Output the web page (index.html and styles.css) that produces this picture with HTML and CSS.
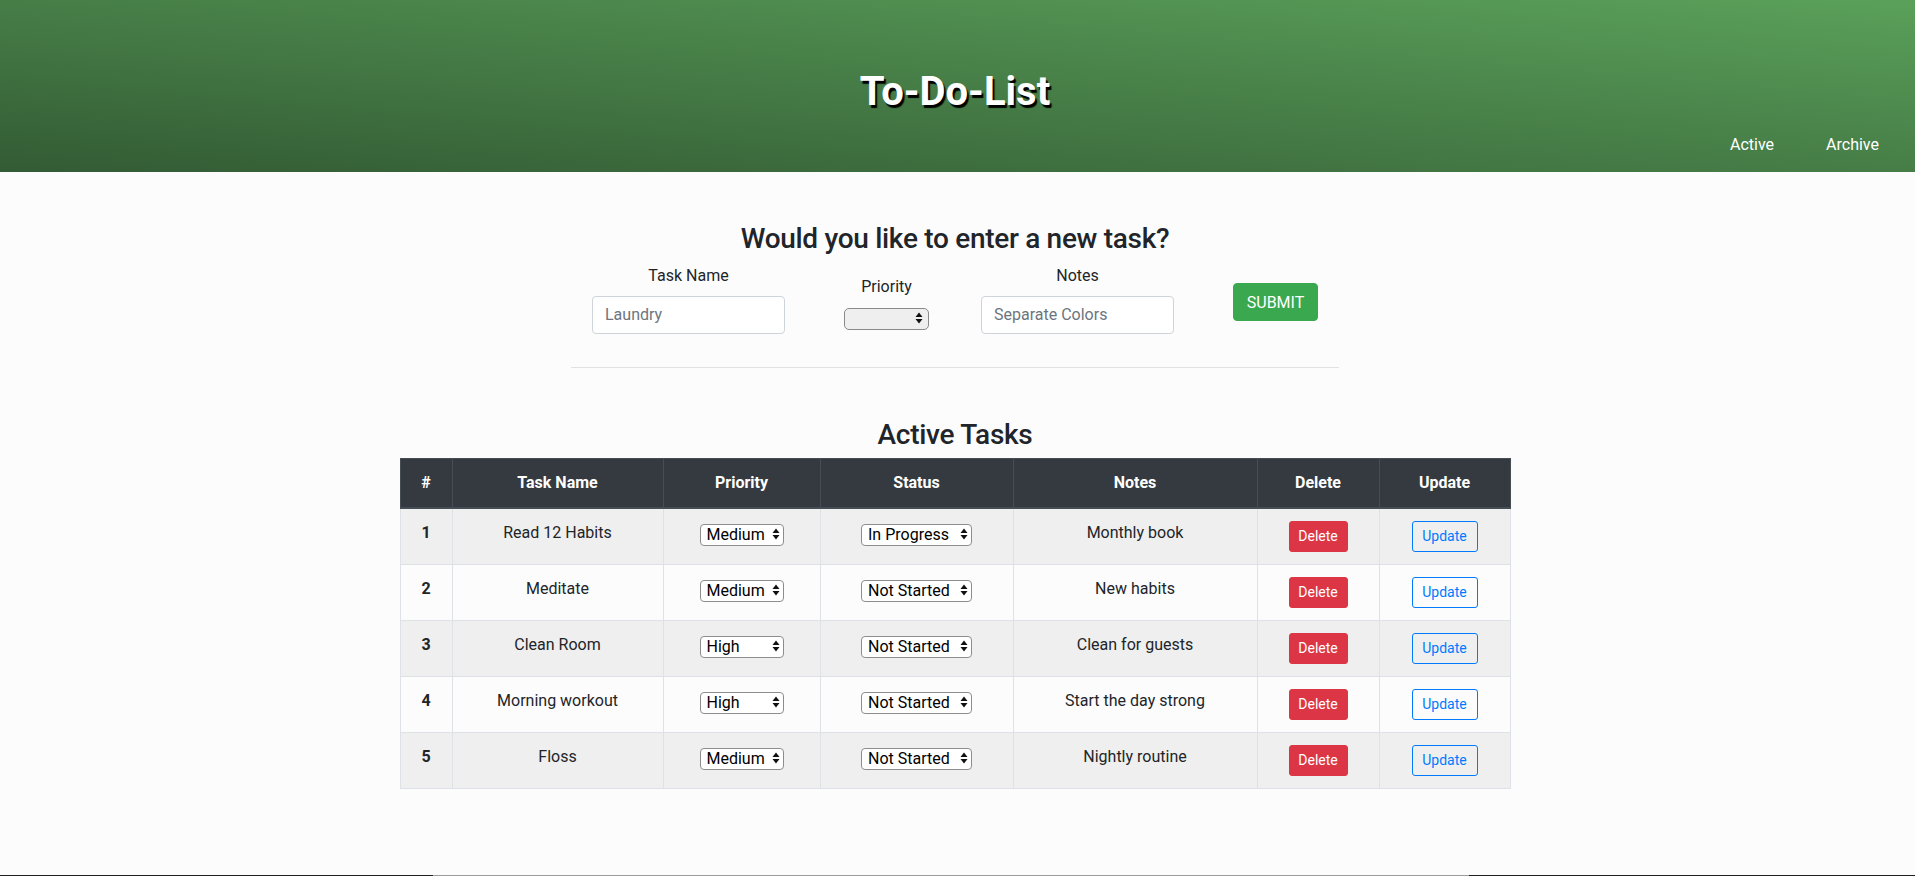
FILE: index.html
```html
<!DOCTYPE html>
<html lang="en">
<head>
<meta charset="utf-8">
<title>To-Do-List</title>
<link rel="stylesheet" href="styles.css">
</head>
<body>
<header class="site-header">
  <h1 class="site-title">To-Do-List</h1>
  <nav class="site-nav">
    <a href="#" class="nav-link">Active</a>
    <a href="#" class="nav-link">Archive</a>
  </nav>
</header>

<main class="page">
  <section class="new-task">
    <h3 class="section-title">Would you like to enter a new task?</h3>
    <form class="task-form">
      <div class="field field-text field-task">
        <label class="field-label">Task Name</label>
        <input class="text-input" type="text" placeholder="Laundry">
      </div>
      <div class="field field-priority">
        <label class="field-label">Priority</label>
        <span class="select select-form">
          <select class="select-input"><option></option></select>
          <svg class="select-arrows" width="8" height="12" viewBox="0 0 8 12"><path d="M0.5 5 L4 0.5 L7.5 5 Z M0.5 7 L4 11.5 L7.5 7 Z" fill="#111"/></svg>
        </span>
      </div>
      <div class="field field-text field-notes">
        <label class="field-label">Notes</label>
        <input class="text-input" type="text" placeholder="Separate Colors">
      </div>
      <button type="button" class="btn-submit">SUBMIT</button>
    </form>
    <hr class="divider">
  </section>

  <section class="tasks">
    <h3 class="section-title tasks-title">Active Tasks</h3>
    <table class="task-table">
      <colgroup>
        <col class="col-num"><col class="col-name"><col class="col-priority"><col class="col-status"><col class="col-notes"><col class="col-delete"><col class="col-update">
      </colgroup>
      <thead>
        <tr><th>#</th><th>Task Name</th><th>Priority</th><th>Status</th><th>Notes</th><th>Delete</th><th>Update</th></tr>
      </thead>
      <tbody>
        <tr>
          <th>1</th><td>Read 12 Habits</td>
          <td><span class="select select-priority"><select class="select-input"><option>Medium</option></select><svg class="select-arrows" width="8" height="12" viewBox="0 0 8 12"><path d="M0.5 5 L4 0.5 L7.5 5 Z M0.5 7 L4 11.5 L7.5 7 Z" fill="#111"/></svg></span></td>
          <td><span class="select select-status"><select class="select-input"><option>In Progress</option></select><svg class="select-arrows" width="8" height="12" viewBox="0 0 8 12"><path d="M0.5 5 L4 0.5 L7.5 5 Z M0.5 7 L4 11.5 L7.5 7 Z" fill="#111"/></svg></span></td>
          <td>Monthly book</td>
          <td><button type="button" class="btn-sm btn-delete">Delete</button></td>
          <td><button type="button" class="btn-sm btn-update">Update</button></td>
        </tr>
        <tr>
          <th>2</th><td>Meditate</td>
          <td><span class="select select-priority"><select class="select-input"><option>Medium</option></select><svg class="select-arrows" width="8" height="12" viewBox="0 0 8 12"><path d="M0.5 5 L4 0.5 L7.5 5 Z M0.5 7 L4 11.5 L7.5 7 Z" fill="#111"/></svg></span></td>
          <td><span class="select select-status"><select class="select-input"><option>Not Started</option></select><svg class="select-arrows" width="8" height="12" viewBox="0 0 8 12"><path d="M0.5 5 L4 0.5 L7.5 5 Z M0.5 7 L4 11.5 L7.5 7 Z" fill="#111"/></svg></span></td>
          <td>New habits</td>
          <td><button type="button" class="btn-sm btn-delete">Delete</button></td>
          <td><button type="button" class="btn-sm btn-update">Update</button></td>
        </tr>
        <tr>
          <th>3</th><td>Clean Room</td>
          <td><span class="select select-priority"><select class="select-input"><option>High</option></select><svg class="select-arrows" width="8" height="12" viewBox="0 0 8 12"><path d="M0.5 5 L4 0.5 L7.5 5 Z M0.5 7 L4 11.5 L7.5 7 Z" fill="#111"/></svg></span></td>
          <td><span class="select select-status"><select class="select-input"><option>Not Started</option></select><svg class="select-arrows" width="8" height="12" viewBox="0 0 8 12"><path d="M0.5 5 L4 0.5 L7.5 5 Z M0.5 7 L4 11.5 L7.5 7 Z" fill="#111"/></svg></span></td>
          <td>Clean for guests</td>
          <td><button type="button" class="btn-sm btn-delete">Delete</button></td>
          <td><button type="button" class="btn-sm btn-update">Update</button></td>
        </tr>
        <tr>
          <th>4</th><td>Morning workout</td>
          <td><span class="select select-priority"><select class="select-input"><option>High</option></select><svg class="select-arrows" width="8" height="12" viewBox="0 0 8 12"><path d="M0.5 5 L4 0.5 L7.5 5 Z M0.5 7 L4 11.5 L7.5 7 Z" fill="#111"/></svg></span></td>
          <td><span class="select select-status"><select class="select-input"><option>Not Started</option></select><svg class="select-arrows" width="8" height="12" viewBox="0 0 8 12"><path d="M0.5 5 L4 0.5 L7.5 5 Z M0.5 7 L4 11.5 L7.5 7 Z" fill="#111"/></svg></span></td>
          <td>Start the day strong</td>
          <td><button type="button" class="btn-sm btn-delete">Delete</button></td>
          <td><button type="button" class="btn-sm btn-update">Update</button></td>
        </tr>
        <tr>
          <th>5</th><td>Floss</td>
          <td><span class="select select-priority"><select class="select-input"><option>Medium</option></select><svg class="select-arrows" width="8" height="12" viewBox="0 0 8 12"><path d="M0.5 5 L4 0.5 L7.5 5 Z M0.5 7 L4 11.5 L7.5 7 Z" fill="#111"/></svg></span></td>
          <td><span class="select select-status"><select class="select-input"><option>Not Started</option></select><svg class="select-arrows" width="8" height="12" viewBox="0 0 8 12"><path d="M0.5 5 L4 0.5 L7.5 5 Z M0.5 7 L4 11.5 L7.5 7 Z" fill="#111"/></svg></span></td>
          <td>Nightly routine</td>
          <td><button type="button" class="btn-sm btn-delete">Delete</button></td>
          <td><button type="button" class="btn-sm btn-update">Update</button></td>
        </tr>
      </tbody>
    </table>
  </section>
</main>
<div class="window-edge"></div>
</body>
</html>
```

FILE: styles.css
```css
* { box-sizing: border-box; }

html, body {
  margin: 0;
  padding: 0;
}

body {
  background: #fcfcfc;
  color: #212529;
  font-family: Roboto, "Noto Sans", "Liberation Sans", sans-serif;
  font-size: 16px;
  line-height: 24px;
}

/* Header */
.site-header {
  height: 172px;
  padding-top: 68px;
  background: linear-gradient(to top right, #335b34, #5aa05a);
  display: flex;
  flex-direction: column;
}

.site-title {
  margin: 0;
  padding-right: 5px;
  text-align: center;
  color: #fff;
  font-size: 40px;
  line-height: 48px;
  font-weight: 700;
  text-shadow: 2px 3px 1px #000;
}

.site-nav {
  margin-top: 17px;
  display: flex;
  justify-content: flex-end;
  gap: 52px;
  padding-right: 36px;
}

.nav-link {
  color: #fff;
  text-decoration: none;
  font-size: 16px;
  line-height: 24px;
}

/* Main */
.page {
  margin-right: 5px;
}

.section-title {
  margin: 50px 0 8px;
  text-align: center;
  font-size: 28px;
  line-height: 33.6px;
  font-weight: 500;
  letter-spacing: -0.3px;
}

.task-form {
  display: flex;
  justify-content: center;
  align-items: center;
}

.field {
  display: flex;
  flex-direction: column;
  align-items: center;
}

.field-text {
  margin-bottom: 7px;
}

.field-task { margin-right: 59px; }
.field-priority { margin-right: 52px; }
.field-notes { margin-right: 59px; }

.field-label {
  margin-bottom: 8px;
  line-height: 24px;
}

.text-input {
  width: 193px;
  height: 38px;
  padding: 6px 12px;
  border: 1px solid #ced4da;
  border-radius: 4px;
  background: #fff;
  font-family: inherit;
  font-size: 16px;
  color: #495057;
}

.text-input::placeholder {
  color: #6c757d;
}

.btn-submit {
  height: 38px;
  width: 85px;
  padding: 0;
  border: 1px solid #39a84e;
  border-radius: 4px;
  background: #39a84e;
  color: #fff;
  font-family: inherit;
  font-size: 16px;
}

.divider {
  width: 768px;
  margin: 26px auto 0;
  border: 0;
  border-top: 1px solid rgba(0, 0, 0, 0.1);
}

/* Select look-alike */
.select {
  position: relative;
  display: inline-block;
  vertical-align: top;
  height: 22px;
}

.select-input {
  appearance: none;
  -webkit-appearance: none;
  width: 100%;
  height: 22px;
  margin: 0;
  padding: 0 16px 0 6px;
  border: 1px solid #8d8d8d;
  border-radius: 4px;
  background: #fff;
  color: #000;
  font-family: inherit;
  font-size: 16px;
  line-height: 20px;
}

.select-arrows {
  position: absolute;
  right: 4px;
  top: 5px;
  pointer-events: none;
}

.select-form { width: 85px; }
.select-form .select-input {
  background: #efefef;
  border-color: #8a8a8a;
  border-radius: 5px;
}
.select-form .select-arrows { right: 6px; }

.select-priority { width: 84px; margin-top: 2px; }
.select-status { width: 111px; margin-top: 2px; }

/* Table */
.tasks-title {
  margin-top: 50px;
  margin-bottom: 7px;
}

.task-table {
  width: 1110px;
  margin: 0 auto;
  border-collapse: collapse;
  table-layout: fixed;
}

.col-num { width: 52px; }
.col-name { width: 211px; }
.col-priority { width: 157px; }
.col-status { width: 193px; }
.col-notes { width: 244px; }
.col-delete { width: 122px; }
.col-update { width: 131px; }

.task-table th,
.task-table td {
  padding: 12px;
  border: 1px solid #dee2e6;
  text-align: center;
  vertical-align: top;
  line-height: 24px;
}

.task-table thead th {
  background: #343a40;
  color: #fff;
  border-color: #454d55;
  border-bottom-width: 2px;
  font-weight: 700;
}

.task-table tbody th {
  font-weight: 700;
}

.task-table tbody tr:nth-child(odd) {
  background: rgba(0, 0, 0, 0.05);
}

.btn-sm {
  display: inline-block;
  vertical-align: top;
  height: 31px;
  padding: 0 9px;
  border: 1px solid transparent;
  border-radius: 3px;
  font-family: inherit;
  font-size: 14px;
  line-height: 21px;
}

.btn-delete {
  width: 59px;
  padding: 0;
  background: #dc3545;
  border-color: #dc3545;
  color: #fff;
}

.btn-update {
  width: 66px;
  padding: 0;
  background: transparent;
  border-color: #007bff;
  color: #007bff;
}

.window-edge {
  position: fixed;
  left: 0;
  right: 0;
  bottom: 0;
  height: 1px;
  background: linear-gradient(to right, #1f1f1f 0, #1f1f1f 433px, #9c9c9c 433px, #9c9c9c 1469px, #1f1f1f 1469px);
}
```
